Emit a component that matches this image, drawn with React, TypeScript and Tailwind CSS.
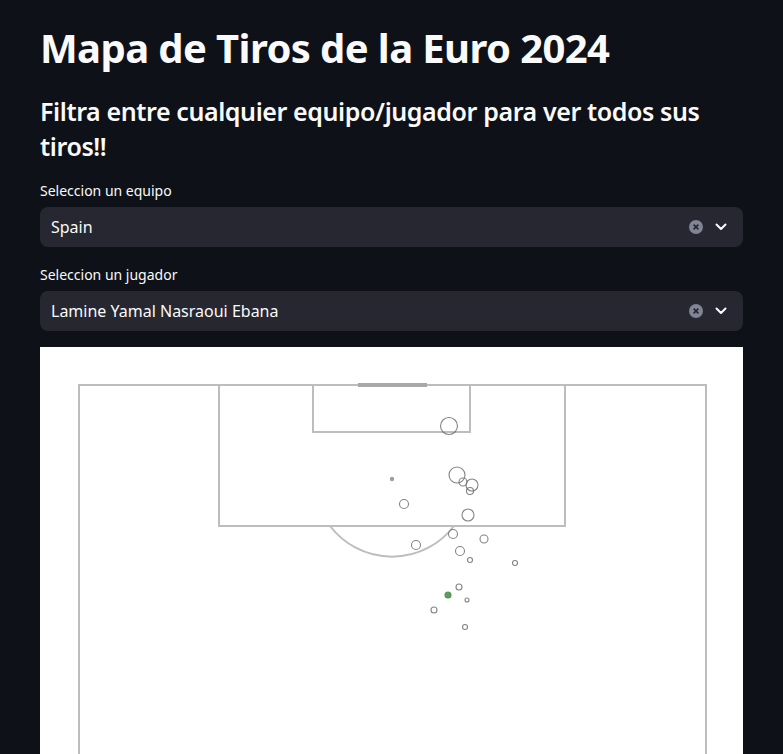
import React from "react";

type Shot = { x: number; y: number; r: number; goal?: boolean };

const shots: Shot[] = [
  { x: 409, y: 79, r: 8.5 },
  { x: 417, y: 128, r: 8 },
  { x: 423, y: 135, r: 4 },
  { x: 432, y: 138, r: 6 },
  { x: 430, y: 144, r: 3.5 },
  { x: 364, y: 157, r: 4.5 },
  { x: 428, y: 168, r: 6 },
  { x: 413, y: 187, r: 4.5 },
  { x: 444, y: 192, r: 4 },
  { x: 376, y: 198, r: 4.5 },
  { x: 420, y: 204, r: 4.5 },
  { x: 430, y: 213, r: 2.5 },
  { x: 475, y: 216, r: 2.5 },
  { x: 419, y: 240, r: 3 },
  { x: 408, y: 248, r: 3, goal: true },
  { x: 427, y: 253, r: 2 },
  { x: 394, y: 263, r: 3 },
  { x: 425, y: 280, r: 2.5 },
];

const ClearIcon = () => (
  <svg width="14" height="14" viewBox="0 0 14 14">
    <circle cx="7" cy="7" r="7" fill="#808495" />
    <path d="M4.6 4.6 L9.4 9.4 M9.4 4.6 L4.6 9.4" stroke="#262730" strokeWidth="1.6" />
  </svg>
);

const Chevron = () => (
  <svg width="12" height="8" viewBox="0 0 12 8">
    <path d="M1.5 1.5 L6 6 L10.5 1.5" stroke="#fafafa" strokeWidth="2" fill="none" strokeLinecap="round" strokeLinejoin="round" />
  </svg>
);

const SelectBox = ({ label, value }: { label: string; value: string }) => (
  <div className="flex flex-col">
    <label className="text-[14px] leading-[18px] text-[#fafafa] mb-[7px]">{label}</label>
    <div className="flex items-center h-[40px] rounded-[8px] bg-[#262730] pl-[11px] pr-[16px]">
      <span className="flex-1 text-[16px] text-[#fafafa]">{value}</span>
      <div className="flex items-center gap-[12px]">
        <ClearIcon />
        <Chevron />
      </div>
    </div>
  </div>
);

const ShotMap = () => (
  <div className="bg-white w-full h-[420px] mt-[16px]">
    <svg width="704" height="420" viewBox="0 0 704 420">
      <g stroke="#bdbdbd" strokeWidth="2" fill="none">
        <path d="M39 420 L39 38 L666 38 L666 420" />
        <path d="M179 38 L179 179 L525 179 L525 38" />
        <path d="M273 38 L273 85 L430 85 L430 38" />
        <path d="M290 179 A78 78 0 0 0 414 179" />
      </g>
      <line x1="318" y1="38" x2="387" y2="38" stroke="#a8a8a8" strokeWidth="4" />
      <circle cx="352" cy="132" r="2.2" fill="#9e9e9e" />
      {shots.map((s, i) => (
        <circle
          key={i}
          cx={s.x}
          cy={s.y}
          r={s.r}
          fill={s.goal ? "#5aa05a" : "none"}
          stroke={s.goal ? "#4a8a4a" : "#6e6e6e"}
          strokeOpacity={0.85}
          strokeWidth="1.1"
        />
      ))}
    </svg>
  </div>
);

export default function App() {
  return (
    <div
      className="min-h-screen bg-[#0e1117] text-[#fafafa] px-[40px] pt-[20px]"
      style={{ fontFamily: '"Noto Sans", sans-serif' }}
    >
      <h1 className="text-[40px] leading-[56px] font-bold tracking-[-0.6px]">Mapa de Tiros de la Euro 2024</h1>
      <h3 className="mt-[18px] text-[25px] leading-[35px] font-semibold tracking-[-0.4px]">
        Filtra entre cualquier equipo/jugador para ver todos sus tiros!!
      </h3>
      <div className="mt-[18px] flex flex-col gap-[19px]">
        <SelectBox label="Seleccion un equipo" value="Spain" />
        <SelectBox label="Seleccion un jugador" value="Lamine Yamal Nasraoui Ebana" />
      </div>
      <ShotMap />
    </div>
  );
}
